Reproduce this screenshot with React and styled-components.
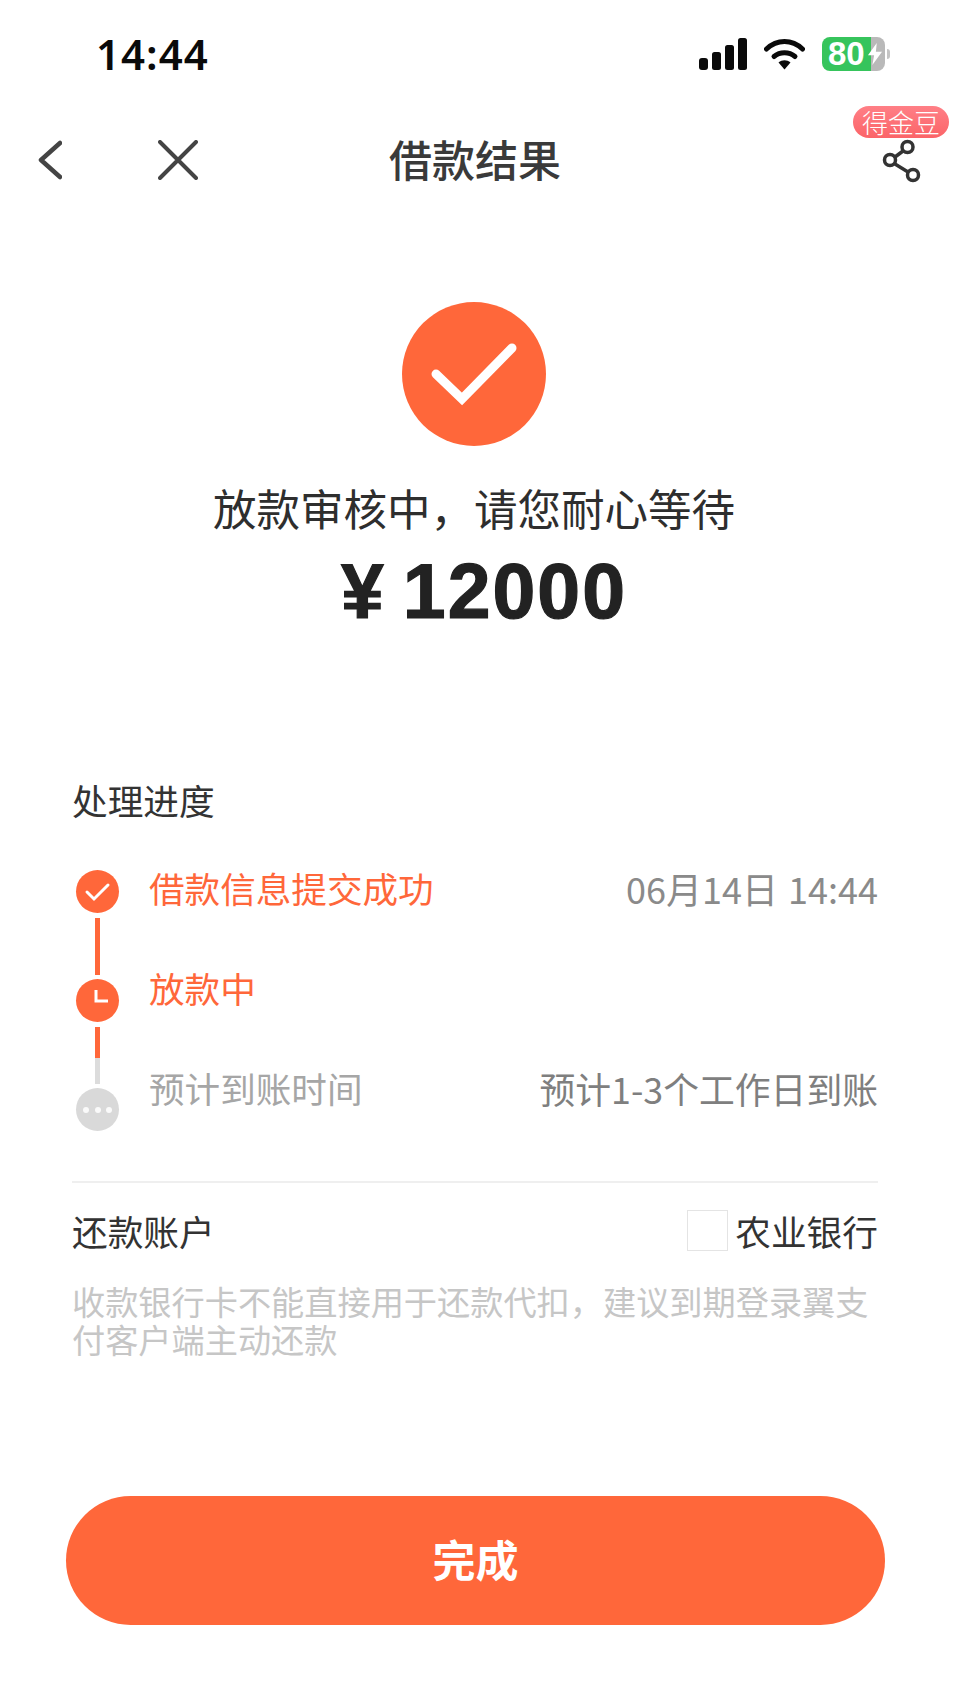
import React from "react";
import styled, { createGlobalStyle } from "styled-components";

const ORANGE = "#ff673a";
const CJK = `"Noto Sans CJK SC", "Noto Sans", sans-serif`;

const Global = createGlobalStyle`
  html, body { margin: 0; padding: 0; background: #fff; }
  * { box-sizing: border-box; }
`;
const Page = styled.div`
  width: 972px; height: 1708px; background: #fff; overflow: hidden;
  font-family: ${CJK}; display: flex; flex-direction: column;
`;
const StatusBar = styled.div`
  height: 108px; display: flex; align-items: center; padding: 0 87px 0 96px; justify-content: space-between;
`;
const Time = styled.div`
  font: 600 42px/1 "Noto Sans", sans-serif; letter-spacing: 1px; color: #0a0a0a; width: 116px;
`;
const StatusIcons = styled.div`
  display: flex; align-items: center; gap: 17px;
`;
const Battery = styled.div`
  width: 63px; height: 34px; border-radius: 8px; position: relative;
  background: linear-gradient(to right, #36c45c 0 49px, #b9b9b9 49px 100%);
  color: #fff; display: flex; align-items: center; padding-left: 6px;
  font: 700 33px/34px "Liberation Sans", sans-serif;
  &::after {
    content: ""; position: absolute; right: -5px; top: 12px; width: 3px; height: 10px;
    background: #c4c4c4; border-radius: 0 3px 3px 0;
  }
`;
const Bolt = styled.svg`
  position: absolute; left: 45px; top: 6px;
`;
const NavBar = styled.div`
  height: 104px; position: relative; display: grid; grid-template-columns: 389px 172px 1fr; align-items: center;
`;
const NavLeft = styled.div`
  display: flex; align-items: center; padding-left: 37px; gap: 96px;
`;
const NavTitle = styled.div`
  font-size: 43px; font-weight: 500; line-height: 1; color: #3a3a3a; white-space: nowrap; text-align: center; padding-bottom: 4px;
`;
const NavRight = styled.div`
  display: flex; justify-content: flex-end; padding-right: 50px; padding-top: 2px;
`;
const Badge = styled.div`
  position: absolute; left: 853px; top: -2px; width: 96px; height: 32px; border-radius: 16px;
  background: linear-gradient(to bottom, #ff7f86, #fb6468); color: #fff;
  font-size: 26px; line-height: 31px; text-align: center; white-space: nowrap; font-weight: 300;
`;
const Hero = styled.div`
  display: flex; flex-direction: column; align-items: center; margin-top: 90px; padding-right: 24px;
`;
const BigCircle = styled.div`
  width: 144px; height: 144px; border-radius: 50%; background: ${ORANGE};
  display: flex; align-items: center; justify-content: center;
`;
const HeroText = styled.div`
  margin-top: 34px; font-size: 43.5px; line-height: 56px; color: #2e2e2e; white-space: nowrap;
`;
const Amount = styled.div`
  margin: 11px 0 0 20px; font: 700 77px/88px "Liberation Sans", sans-serif; letter-spacing: 2px; color: #222; white-space: nowrap;
  -webkit-text-stroke: 1.2px #222;
  display: flex; align-items: center; gap: 17px;
`;
const Yen = styled.span`
  font-size: 77px; font-weight: 700;
`;
const Body = styled.div`
  padding: 0 94px 0 72px; margin-top: 141px;
`;
const SectionTitle = styled.div`
  font-size: 35.700px; line-height: 48px; color: #333;
`;
const Timeline = styled.div`
  display: flex; margin-top: 39px; gap: 30px;
`;
const Rail = styled.div`
  width: 47px; padding: 7px 0 0 3px; display: flex; flex-direction: column; align-items: center;
`;
const Dot = styled.div`
  width: 43px; height: 43px; border-radius: 50%; flex: none; background: ${p => p.$grey ? "#d9d9d9" : ORANGE};
  display: flex; align-items: center; justify-content: center;
`;
const Connector = styled.div`
  width: 5px; height: ${p => p.$h}px; flex: none; margin: 5px 0 4px;
  background: ${p => p.$bg};
`;
const Steps = styled.div`
  flex: 1; display: flex; flex-direction: column;
`;
const Step = styled.div`
  height: 100px; display: flex; justify-content: space-between; align-items: flex-start;
  line-height: 50px;
`;
const StepName = styled.span`
  color: ${p => p.$c};
  font-size: 35.600px;
`;
const StepValue = styled.span`
  color: #7f7f7f; font-size: 35.800px;
`;
const DateValue = styled(StepValue)`
  font-size: 36px; color: #8a8a8a; word-spacing: 2px;
`;
const Divider = styled.div`
  height: 2px; background: #efefef; margin-top: 18px;
`;
const AccountRow = styled.div`
  display: flex; justify-content: space-between; align-items: center; height: 52px; margin-top: 21px;
  font-size: 35.700px; color: #333;
`;
const Bank = styled.div`
  display: flex; align-items: center; gap: 7px;
`;
const BankLogo = styled.div`
  width: 41px; height: 41px; border: 1.5px solid #e4e4e4; background: #fff;
`;
const Note = styled.div`
  margin-top: 26px; font-size: 33.200px; line-height: 38px; color: #c6c6c6;
`;
const Footer = styled.div`
  padding: 0 87px 0 66px; margin-top: 138px;
`;
const Done = styled.button`
  width: 100%; height: 129px; border: 0; border-radius: 65px; background: ${ORANGE};
  color: #fff; font: 700 43px/1 ${CJK}; padding: 0 0 4px;
`;

export default function App() {
  return (
    <Page>
      <Global />
      <StatusBar>
        <Time>14:44</Time>
        <StatusIcons>
          <svg width="48" height="32" viewBox="0 0 48 32">
            <rect x="0" y="20" width="9" height="12" rx="3" fill="#0a0a0a" />
            <rect x="13" y="14" width="9" height="18" rx="2.5" fill="#0a0a0a" />
            <rect x="26" y="7" width="9" height="25" rx="2.5" fill="#0a0a0a" />
            <rect x="39" y="0" width="9" height="32" rx="2.5" fill="#0a0a0a" />
          </svg>
          <svg width="41" height="32" viewBox="0 0 41 32" fill="none">
            <path d="M2.500 11 C13 1 28 1 38.500 11" stroke="#0a0a0a" strokeWidth="5" strokeLinecap="round" />
            <path d="M10 18.500 C16 13.500 25 13.500 31 18.500" stroke="#0a0a0a" strokeWidth="5" strokeLinecap="round" />
            <path d="M14.500 24.500 C18 21.500 23 21.500 26.500 24.500 L20.500 31.500 Z" fill="#0a0a0a" />
          </svg>
          <Battery>
            80
            <Bolt width="16" height="22" viewBox="0 0 18 25">
              <path d="M11 0 L1 14 H8 L6 25 L17 10 H10 Z" fill="#fff" />
            </Bolt>
          </Battery>
        </StatusIcons>
      </StatusBar>
      <NavBar>
        <NavLeft>
          <svg width="25" height="40" viewBox="0 0 25 40" fill="none">
            <path d="M23 3 L4 20 L23 37" stroke="#444" strokeWidth="4.500" strokeLinecap="round" strokeLinejoin="round" />
          </svg>
          <svg width="40" height="40" viewBox="0 0 40 40" fill="none">
            <path d="M2 2 L38 38 M38 2 L2 38" stroke="#444" strokeWidth="4" strokeLinecap="round" />
          </svg>
        </NavLeft>
        <NavTitle>借款结果</NavTitle>
        <NavRight>
          <svg width="40" height="44" viewBox="0 0 40 44" fill="none">
            <circle cx="25.500" cy="8" r="5.500" stroke="#333" strokeWidth="3.500" />
            <circle cx="8" cy="21" r="5.500" stroke="#333" strokeWidth="3.500" />
            <circle cx="31" cy="36" r="5.500" stroke="#333" strokeWidth="3.500" />
            <path d="M21 12 L13 18 M13 25 L26 33" stroke="#333" strokeWidth="3.500" />
          </svg>
        </NavRight>
        <Badge>得金豆</Badge>
      </NavBar>
      <Hero>
        <BigCircle>
          <svg width="144" height="144" viewBox="0 0 144 144" fill="none">
            <path d="M34 72 L60 97 L110 46" stroke="#fff" strokeWidth="9" strokeLinecap="round" />
          </svg>
        </BigCircle>
        <HeroText>放款审核中，请您耐心等待</HeroText>
        <Amount><Yen>¥</Yen>12000</Amount>
      </Hero>
      <Body>
        <SectionTitle>处理进度</SectionTitle>
        <Timeline>
          <Rail>
            <Dot>
              <svg width="43" height="43" viewBox="0 0 43 43" fill="none">
                <path d="M11 22 L18 29 L32 15" stroke="#fff" strokeWidth="3" strokeLinecap="round" />
              </svg>
            </Dot>
            <Connector $h={57} $bg={ORANGE} />
            <Dot>
              <svg width="43" height="43" viewBox="0 0 43 43" fill="none">
                <path d="M20 11 V22 H32" stroke="#fff" strokeWidth="3" />
              </svg>
            </Dot>
            <Connector $h={57} $bg={`linear-gradient(to bottom, ${ORANGE} 0 31px, #dcdcdc 31px 100%)`} />
            <Dot $grey>
              <svg width="43" height="43" viewBox="0 0 43 43" fill="#fff" fillOpacity="0.85">
                <circle cx="10" cy="22" r="3" />
                <circle cx="22" cy="22" r="3" />
                <circle cx="33" cy="22" r="3" />
              </svg>
            </Dot>
          </Rail>
          <Steps>
            <Step>
              <StepName $c={ORANGE}>借款信息提交成功</StepName>
              <DateValue>06月14日 14:44</DateValue>
            </Step>
            <Step>
              <StepName $c={ORANGE}>放款中</StepName>
            </Step>
            <Step>
              <StepName $c="#a6a6a6">预计到账时间</StepName>
              <StepValue>预计1-3个工作日到账</StepValue>
            </Step>
          </Steps>
        </Timeline>
        <Divider />
        <AccountRow>
          <span>还款账户</span>
          <Bank>
            <BankLogo />
            <span>农业银行</span>
          </Bank>
        </AccountRow>
        <Note>收款银行卡不能直接用于还款代扣，建议到期登录翼支付客户端主动还款</Note>
      </Body>
      <Footer>
        <Done>完成</Done>
      </Footer>
    </Page>
  );
}
